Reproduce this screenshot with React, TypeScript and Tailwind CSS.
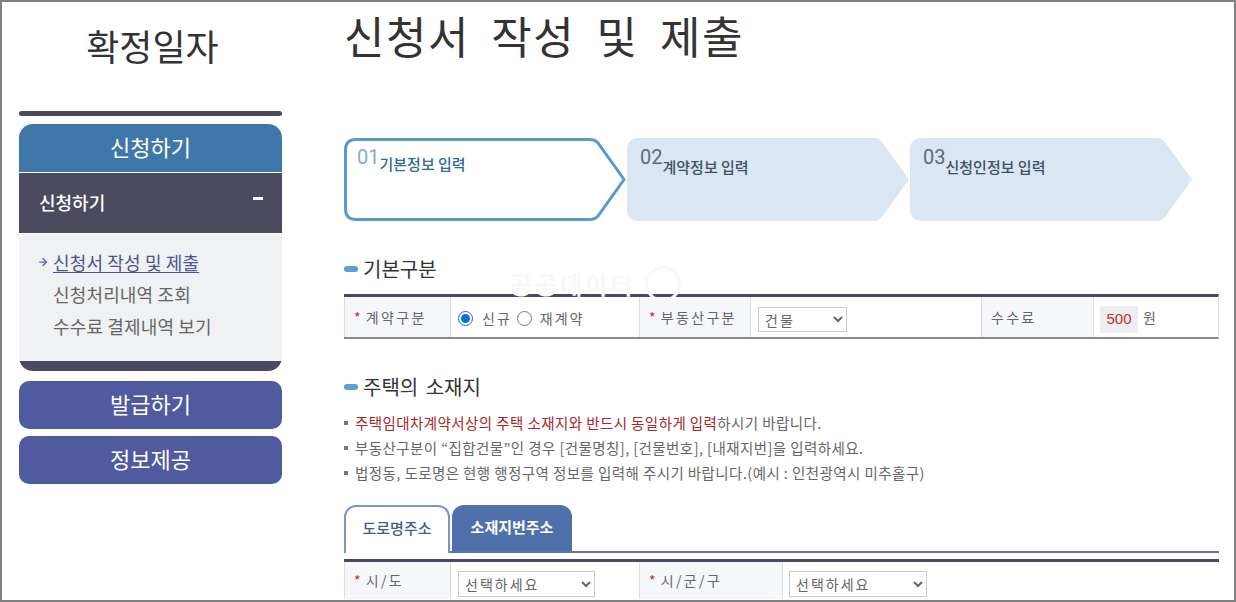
import React from "react";
import { ArrowRight } from "lucide-react";

const font = "font-['Noto_Sans_CJK_KR','Noto_Sans',sans-serif]";

const steps = [
  { no: "01", label: "기본정보 입력", active: true },
  { no: "02", label: "계약정보 입력", active: false },
  { no: "03", label: "신청인정보 입력", active: false },
];

function Step({ no, label, active }: { no: string; label: string; active: boolean }) {
  return (
    <div className="relative w-[282px] h-[83px] shrink-0">
      <svg className="absolute inset-0" width="282" height="83" viewBox="0 0 282 83">
        {active ? (
          <path
            d="M12 1.5H246Q251 1.5 254 5L280 41.5L254 78Q251 81.5 246 81.5H12Q1.5 81.5 1.5 71V12Q1.5 1.5 12 1.5Z"
            fill="#ffffff"
            stroke="#5b9aca"
            strokeWidth="3"
          />
        ) : (
          <path
            d="M12 0H248Q252 0 255 4L282 41.5L255 79Q252 83 248 83H12Q0 83 0 71V12Q0 0 12 0Z"
            fill="#dae6f2"
          />
        )}
      </svg>
      <div className="relative flex items-start pl-[13px] pt-[7px]">
        <span className={`text-[20px] leading-[24px] font-['Roboto',sans-serif] ${active ? "text-[#84aed0]" : "text-[#5e6a7c]"}`}>{no}</span>
        <span className={`text-[15px] leading-[20px] font-medium ${active ? "mt-[9px] text-[#2f6a94]" : "mt-[12px] text-[#3f5068]"}`}>{label}</span>
      </div>
    </div>
  );
}

function Heading({ children }: { children: React.ReactNode }) {
  return (
    <div className="flex items-center text-[20px] leading-[26px] text-[#333] [word-spacing:3px]">
      <span className="w-[14px] h-[6px] rounded-full bg-[#5b9fd0] mr-[5px]" />
      {children}
    </div>
  );
}

function Label({ children, required = true }: { children: React.ReactNode; required?: boolean }) {
  return (
    <div className="flex items-center h-full bg-[#f6f7fa] border-x border-[#dedede] pl-[9px] text-[14px] tracking-[2.3px] text-[#666]">
      {required && <span className="text-[#c0272d] mr-[3px]">*</span>}
      {children}
    </div>
  );
}

function Select({ value, width, height }: { value: string; width: string; height: string }) {
  return (
    <select
      defaultValue={value}
      className={`${width} ${height} border border-[#ccc] bg-white pl-[2px] text-[14px] tracking-[2px] text-[#666]`}
    >
      <option>{value}</option>
    </select>
  );
}

export default function App() {
  return (
    <div className={`relative w-[1236px] h-[602px] overflow-hidden border-2 border-[#808080] bg-white flex ${font}`}>
      <aside className="w-[280px] shrink-0 pl-[17px]">
        <h1 className="h-[109px] w-[263px] pt-[19px] pl-[4px] text-center text-[36px] leading-[48px] text-[#333]">확정일자</h1>
        <div className="w-[263px] h-[5px] rounded-full bg-[#4b4a5e]" />
        <div className="w-[263px] mt-[8px] rounded-[14px] overflow-hidden">
          <div className="h-[48px] pb-[4px] bg-[#4077ab] flex items-center justify-center text-[22px] text-white">신청하기</div>
          <div className="mt-px h-[60px] bg-[#4b4a5e] flex items-center justify-between pl-[20px] pr-[19px] pb-[2px] text-[18px] font-medium text-white">
            <span>신청하기</span>
            <span className="w-[10px] h-[3px] bg-white mb-[8px]" />
          </div>
          <div className="mt-px h-[127px] bg-[#eff1f2] pt-[12px] text-[18px] leading-[32px] tracking-[0.15px] text-[#666]">
            <div className="flex items-center pl-[18px] text-[#4a5590]">
              <ArrowRight className="w-[12px] h-[12px] mr-[4px] text-[#5a6aa0]" strokeWidth={2.5} />
              <span className="underline underline-offset-2">신청서 작성 및 제출</span>
            </div>
            <div className="pl-[34px]">신청처리내역 조회</div>
            <div className="pl-[34px]">수수료 결제내역 보기</div>
          </div>
          <div className="h-[10px] bg-[#4b4a5e]" />
        </div>
        <div className="w-[263px] h-[48px] mt-[10px] pb-[4px] rounded-[10px] bg-[#4f5a9f] flex items-center justify-center text-[22px] text-white">발급하기</div>
        <div className="w-[263px] h-[48px] mt-[7px] pb-[4px] rounded-[10px] bg-[#4f5a9f] flex items-center justify-center text-[22px] text-white">정보제공</div>
      </aside>

      <main className="w-[875px] ml-[62px] shrink-0">
        <h2 className="h-[136px] pt-[3px] text-[44px] leading-[60px] tracking-[1.5px] [word-spacing:10px] text-[#333]">신청서 작성 및 제출</h2>

        <div className="flex gap-px">
          {steps.map((s) => (
            <Step key={s.no} {...s} />
          ))}
        </div>

        <div className="mt-[35px]">
          <Heading>기본구분</Heading>
        </div>
        <div className="relative mt-[12px] h-[45px] border-t-[3px] border-b-2 border-t-[#4b4a5e] border-b-[#8a8a8a] border-r border-r-[#dedede] grid grid-cols-[107px_188px_112px_230px_113px_125px] items-center">
          <Label>계약구분</Label>
          <div className="flex items-center pl-[7px] pt-[3px] text-[14px] tracking-[2px] text-[#666]">
            <input type="radio" name="kind" defaultChecked className="w-[15px] h-[15px] accent-[#0f6fd6]" />
            <span className="ml-[9px]">신규</span>
            <input type="radio" name="kind" className="w-[15px] h-[15px] ml-[5px] accent-[#0f6fd6]" />
            <span className="ml-[8px]">재계약</span>
          </div>
          <Label>부동산구분</Label>
          <div className="pl-[7px] pt-[5px]">
            <Select value="건물" width="w-[89px]" height="h-[25px]" />
          </div>
          <Label required={false}>수수료</Label>
          <div className="flex items-center pl-[6px] pt-[5px] text-[14px] text-[#666]">
            <span className="w-[38px] h-[27px] bg-[#eeeeee] text-[#b5332e] flex items-center justify-center font-['Liberation_Sans',sans-serif] text-[15px]">500</span>
            <span className="ml-[5px] mb-[5px]">원</span>
          </div>
        </div>

        <div className="mt-[35px]">
          <Heading>주택의 소재지</Heading>
        </div>
        <ul className="mt-[10px] text-[14.5px] leading-[25px] tracking-[0.42px] text-[#666]">
          <li className="flex items-center">
            <span className="w-[4px] h-[4px] bg-[#777] mr-[7px]" />
            <span className="text-[#a8262a]">주택임대차계약서상의 주택 소재지와 반드시 동일하게 입력</span>하시기 바랍니다.
          </li>
          <li className="flex items-center">
            <span className="w-[4px] h-[4px] bg-[#777] mr-[7px]" />
            부동산구분이 “집합건물”인 경우 [건물명칭], [건물번호], [내재지번]을 입력하세요.
          </li>
          <li className="flex items-center">
            <span className="w-[4px] h-[4px] bg-[#777] mr-[7px]" />
            법정동, 도로명은 현행 행정구역 정보를 입력해 주시기 바랍니다.(예시 : 인천광역시 미추홀구)
          </li>
        </ul>

        <div className="mt-[20px] flex items-end gap-[2px] border-b-2 border-[#5a76ad] h-[48px]">
          <div className="w-[106px] h-[48px] -mb-[2px] pb-[4px] rounded-t-[12px] border-2 border-b-0 border-[#7b97c0] bg-white flex items-center justify-center text-[15px] font-medium text-[#3f5f86]">도로명주소</div>
          <div className="w-[120px] h-[46px] pb-[2px] rounded-t-[12px] bg-[#5070ac] flex items-center justify-center text-[15px] font-bold text-white">소재지번주소</div>
        </div>
        <div className="mt-[6px] h-[40px] border-t-[3px] border-t-[#4b4a5e] grid grid-cols-[107px_188px_144px_436px] items-start">
          <div className="h-[37px]"><Label>시/도</Label></div>
          <div className="pl-[7px] pt-[9px] h-[37px]">
            <Select value="선택하세요" width="w-[137px]" height="h-[26px]" />
          </div>
          <div className="h-[37px]"><Label>시/군/구</Label></div>
          <div className="pl-[6px] pt-[9px]">
            <Select value="선택하세요" width="w-[138px]" height="h-[26px]" />
          </div>
        </div>
      </main>

      {/* faint watermark behind the first table */}
      <div className="absolute left-[508px] top-[264px] flex items-center gap-[10px] text-[#f8f8f8] pointer-events-none">
        <span className="text-[24px] leading-[30px] font-bold tracking-[3px]">공공데이터</span>
        <span className="w-[36px] h-[36px] rounded-full border-[3px] border-[#f8f8f8]" />
      </div>
    </div>
  );
}
